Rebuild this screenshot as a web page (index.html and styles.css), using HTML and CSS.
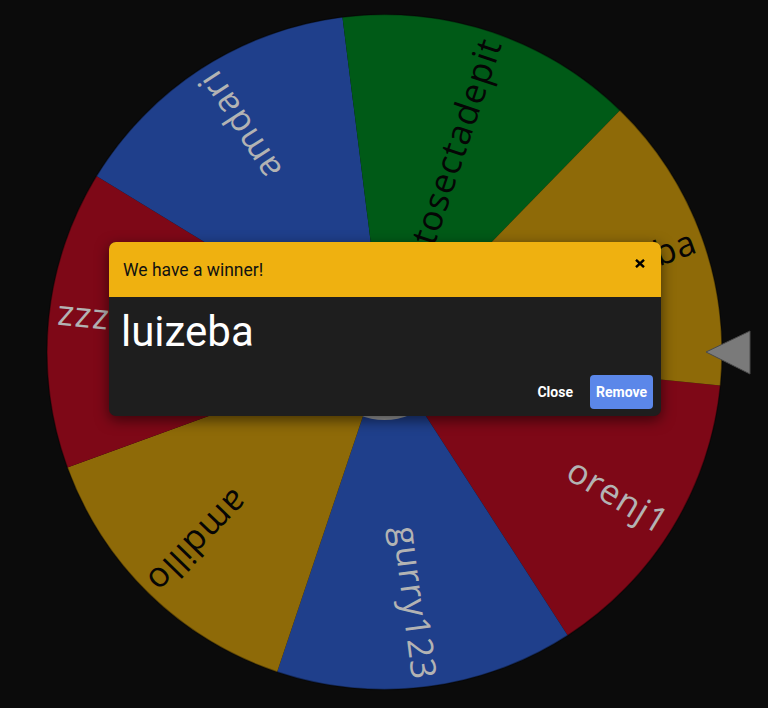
FILE: index.html
```html
<!DOCTYPE html>
<html lang="en">
<head>
<meta charset="utf-8">
<title>Wheel - winner</title>
<link rel="stylesheet" href="styles.css">
</head>
<body>
<main class="stage">
  <svg class="wheel" viewBox="0 0 768 708" width="768" height="708" aria-label="Wheel">
    <g class="segments">
      <path class="seg red"   d="M384.5 352 L720.33 385.52 A337.5 337.5 0 0 1 567.68 635.47 Z"/>
      <path class="seg blue"  d="M384.5 352 L567.68 635.47 A337.5 337.5 0 0 1 277.09 671.95 Z"/>
      <path class="seg gold"  d="M384.5 352 L277.09 671.95 A337.5 337.5 0 0 1 67.38 467.50 Z"/>
      <path class="seg red"   d="M384.5 352 L67.38 467.50 A337.5 337.5 0 0 1 96.48 176.07 Z"/>
      <path class="seg blue"  d="M384.5 352 L96.48 176.07 A337.5 337.5 0 0 1 342.45 17.13 Z"/>
      <path class="seg green" d="M384.5 352 L342.45 17.13 A337.5 337.5 0 0 1 620.10 110.34 Z"/>
      <path class="seg gold"  d="M384.5 352 L620.10 110.34 A337.5 337.5 0 0 1 720.33 385.52 Z"/>
    </g>
    <circle class="rim" cx="384.5" cy="352" r="337.5"/>
    <g class="labels">
      <text class="label light" x="714.5" y="352" transform="rotate(31.414 384.5 352)">orenj1</text>
      <text class="label light" x="714.5" y="352" transform="rotate(82.843 384.5 352)">gurry123</text>
      <text class="label dark"  x="714.5" y="352" transform="rotate(134.271 384.5 352)">amdillo</text>
      <text class="label light" x="714.5" y="352" transform="rotate(185.700 384.5 352)">zzz</text>
      <text class="label light" x="714.5" y="352" transform="rotate(237.129 384.5 352)">amdari</text>
      <text class="label dark"  x="714.5" y="352" transform="rotate(288.557 384.5 352)">tosectadepit</text>
      <text class="label dark"  x="714.5" y="352" transform="rotate(339.986 384.5 352)">luizeba</text>
    </g>
    <circle class="hub" cx="384.5" cy="352" r="68"/>
    <polygon class="pointer" points="706,352 750,331 750,374"/>
  </svg>

  <div class="modal" role="dialog" aria-labelledby="winner-title">
    <div class="modal-header">
      <h5 id="winner-title" class="modal-title">We have a winner!</h5>
      <button class="btn-close" type="button" aria-label="Close">
        <svg viewBox="0 0 10 9" width="10" height="9"><path d="M1 0.8 L9 8.2 M9 0.8 L1 8.2"/></svg>
      </button>
    </div>
    <div class="modal-body">
      <p class="winner-name">luizeba</p>
    </div>
    <div class="modal-footer">
      <button class="btn btn-plain" type="button">Close</button>
      <button class="btn btn-primary" type="button">Remove</button>
    </div>
  </div>
</main>
</body>
</html>
```

FILE: styles.css
```css
html, body {
  margin: 0;
  padding: 0;
  background: #0b0b0b;
  overflow: hidden;
}

.stage {
  position: relative;
  width: 768px;
  height: 708px;
  font-family: Roboto, "Liberation Sans", sans-serif;
}

.wheel {
  display: block;
}

.seg.red { fill: #7e0817; }
.seg.blue { fill: #1f3f8b; }
.seg.gold { fill: #8e6a08; }
.seg.green { fill: #005a17; }

.rim {
  fill: none;
  stroke: rgba(0, 0, 0, 0.35);
  stroke-width: 1.5;
}

.label {
  font-family: "Open Sans", "DejaVu Sans", sans-serif;
  font-weight: 400;
  font-size: 35px;
  letter-spacing: 1px;
  text-anchor: end;
  dominant-baseline: central;
}
.label.light { fill: #b3b3b3; }
.label.dark { fill: #050505; }

.hub { fill: #9f9f9f; }

.pointer {
  fill: #7a7a7a;
  stroke: #4a4a4a;
  stroke-width: 1;
  stroke-linejoin: miter;
}

.modal {
  position: absolute;
  left: 109px;
  top: 242px;
  width: 552px;
  border-radius: 7px;
  overflow: hidden;
  background: #1e1e1e;
  box-shadow: 0 4px 14px rgba(0, 0, 0, 0.55);
}

.modal-header {
  height: 55px;
  box-sizing: border-box;
  padding: 0 16px 0 14px;
  background: #efb110;
  display: flex;
  align-items: center;
  justify-content: space-between;
}

.modal-title {
  margin: 0;
  font-size: 17.5px;
  font-weight: 400;
  color: #111;
  line-height: 22px;
}

.btn-close {
  border: 0;
  padding: 0;
  margin: 0 0 12px 0;
  background: none;
  width: 10px;
  height: 9px;
  display: block;
}
.btn-close svg {
  display: block;
}
.btn-close path {
  stroke: #000;
  stroke-width: 2.4;
  fill: none;
}

.modal-body {
  padding: 9px 12px 0 12px;
}

.winner-name {
  margin: 0;
  font-size: 42px;
  line-height: 52px;
  color: #ffffff;
  font-weight: 400;
}

.modal-footer {
  display: flex;
  justify-content: flex-end;
  align-items: center;
  gap: 11px;
  padding: 17px 8px 7px 8px;
}

.btn {
  height: 34px;
  padding: 0 6px;
  border: 0;
  border-radius: 4px;
  font-family: Roboto, "Liberation Sans", sans-serif;
  font-size: 14px;
  font-weight: 700;
  color: #ffffff;
  cursor: pointer;
}

.btn-plain {
  background: transparent;
}

.btn-primary {
  background: #5b87e9;
}
```
